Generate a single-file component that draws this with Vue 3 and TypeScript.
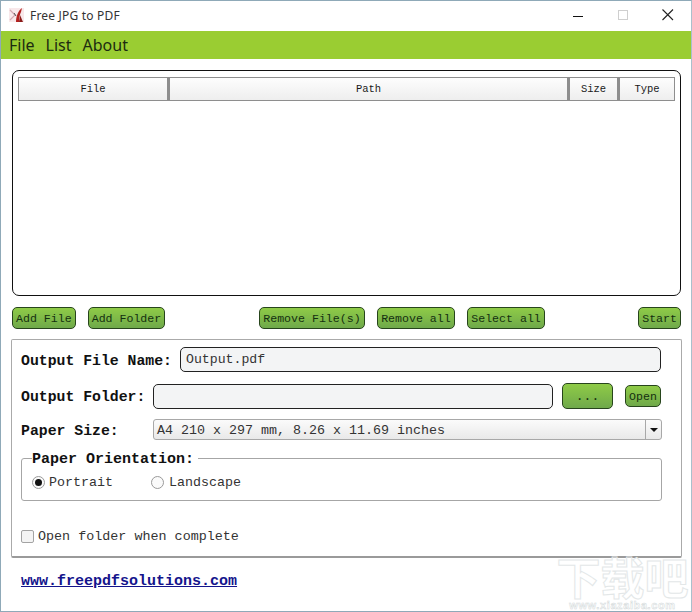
<script setup lang="ts">
const columns = [
  { label: 'File', width: 150 },
  { label: 'Path', width: 400 },
  { label: 'Size', width: 50 },
  { label: 'Type', width: 57 },
]
</script>

<template>
  <div class="window">
    <header class="titlebar">
      <svg class="app-icon" width="16" height="16" viewBox="0 0 16 16">
        <rect x="0" y="1" width="15" height="14" fill="#f8e8ea" />
        <path d="M1 3 L6 8 L1 13" fill="none" stroke="#d3a8b0" stroke-width="1.2" />
        <path d="M13 1 C9 4 7 9 7 15 L10 15 C10 10 11 7 12 5 Z" fill="#b3201f" />
        <path d="M11 8 L14 15 L10 15 Z" fill="#8a1b19" />
        <path d="M5 6 L7 9" stroke="#555" stroke-width="1" />
      </svg>
      <span class="app-title">Free JPG to PDF</span>
      <div class="winctl">
        <svg width="16" height="16" viewBox="0 0 16 16"><path d="M3 9.5H13" stroke="#111" stroke-width="1" /></svg>
        <svg width="16" height="16" viewBox="0 0 16 16"><rect x="3.5" y="3.5" width="9" height="9" fill="none" stroke="#cfcfcf" /></svg>
        <svg width="16" height="16" viewBox="0 0 16 16"><path d="M2.5 2.5L13 13M13 2.5L2.5 13" stroke="#222" stroke-width="1.1" /></svg>
      </div>
    </header>

    <nav class="menubar">
      <span>File</span><span>List</span><span>About</span>
    </nav>

    <main class="content">
      <section class="listbox">
        <div class="listhead">
          <div v-for="c in columns" :key="c.label" class="col" :style="{ width: c.width + 'px' }">{{ c.label }}</div>
        </div>
      </section>

      <div class="actions">
        <div class="group">
          <button class="btn">Add File</button>
          <button class="btn">Add Folder</button>
        </div>
        <div class="group mid">
          <button class="btn">Remove File(s)</button>
          <button class="btn">Remove all</button>
          <button class="btn">Select all</button>
        </div>
        <button class="btn">Start</button>
      </div>

      <section class="panel">
        <div class="row r1">
          <label class="lbl">Output File Name:</label>
          <div class="field grow">Output.pdf</div>
        </div>
        <div class="row r2">
          <label class="lbl lbl-folder">Output Folder:</label>
          <div class="field folder"></div>
          <button class="btn dots">...</button>
          <button class="btn open">Open</button>
        </div>
        <div class="row r3">
          <label class="lbl lbl-folder">Paper Size:</label>
          <div class="select">
            <span class="select-text">A4 210 x 297 mm, 8.26 x 11.69 inches</span>
            <span class="select-arrow"><i></i></span>
          </div>
        </div>

        <fieldset class="orient">
          <legend>Paper Orientation:</legend>
          <div class="radios">
            <span class="radio on"></span><span class="rlabel portrait">Portrait</span>
            <span class="radio"></span><span class="rlabel landscape">Landscape</span>
          </div>
        </fieldset>

        <div class="check">
          <span class="box"></span><span>Open folder when complete</span>
        </div>
      </section>

      <a class="link">www.freepdfsolutions.com</a>
    </main>

    <div class="watermark">
      <span class="wm-big">下载吧</span>
      <span class="wm-small">www.xiazaiba.com</span>
    </div>
  </div>
</template>

<style>
html, body { margin: 0; background: #fff; }
</style>

<style scoped>
* { box-sizing: border-box; }
.window {
  position: relative;
  width: 692px;
  height: 612px;
  overflow: hidden;
  background: #fff;
  border: 1px solid #8fa9b8;
  border-right-color: #a9c0cc;
  font-family: "Liberation Mono", monospace;
  color: #1a1a1a;
}
.titlebar {
  height: 30px;
  display: flex;
  align-items: center;
  padding: 0 0 2px 8px;
}
.app-title {
  margin-left: 5px;
  font: 12px "Noto Sans", "Open Sans", sans-serif;
  letter-spacing: 0.2px;
  color: #333;
}
.winctl {
  margin-left: auto;
  display: flex;
  gap: 29px;
  padding-right: 15px;
}
.menubar {
  height: 28px;
  background: #9acd32;
  display: flex;
  align-items: center;
  gap: 11px;
  padding: 0 0 1px 8px;
  font: 16px "Noto Sans", "Open Sans", sans-serif;
  color: #1c2b10;
}
.content { padding: 11px 10px 0 11px; }
.listbox {
  height: 226px;
  border: 1px solid #111;
  border-radius: 7px;
  padding: 6px 5px;
}
.listhead { display: flex; height: 24px; }
.col {
  display: flex;
  align-items: center;
  justify-content: center;
  padding-bottom: 1px;
  font-size: 10.5px;
  background: linear-gradient(#fdfdfd, #eeeeee);
  border: 1px solid #8e8e8e;
}
.col + .col { border-left: 2px solid #8e8e8e; }
.actions {
  display: flex;
  align-items: center;
  margin-top: 11px;
  height: 22px;
}
.group { display: flex; gap: 12px; }
.mid { gap: 12.5px; margin-left: 94px; margin-right: auto; }
.btn {
  height: 22px;
  padding: 1px 3px 0;
  border: 1px solid #27451c;
  border-radius: 5px;
  background: linear-gradient(#8fcb47, #6fa94a);
  font-family: "Liberation Mono", monospace;
  font-size: 11.6px;
  color: #14300f;
  white-space: nowrap;
}
.panel {
  margin-top: 10px;
  margin-left: -1px;
  margin-right: -1px;
  height: 219px;
  border: 1px solid #aaa;
  border-bottom: 2px solid #9a9a9a;
  border-radius: 2px;
  padding: 7px 9px 0;
}
.row { display: flex; align-items: center; }
.r1 { height: 25px; }
.r2 { height: 26px; margin-top: 11px; }
.r3 { height: 21px; margin-top: 10px; }
.lbl {
  padding-top: 2px;
  font-size: 14.8px;
  font-weight: 700;
  white-space: nowrap;
  color: #111;
}
.lbl-folder { width: 132px; }
.r1 .lbl { width: 159px; }
.field {
  height: 25px;
  background: #f3f4f5;
  border: 1px solid #222;
  border-radius: 5px;
  padding-left: 5px;
  font-size: 13.2px;
  line-height: 23px;
  color: #333;
}
.grow { width: 481px; }
.folder { width: 400px; }
.dots {
  width: 51px;
  height: 26px;
  margin-left: 9px;
  font-size: 13px;
}
.open {
  width: 36px;
  margin-left: 12px;
  padding: 1px 0 0;
}
.select {
  width: 509px;
  height: 21px;
  display: flex;
  border: 1px solid #a8a8a8;
  border-radius: 3px;
  background: linear-gradient(#fbfbfb, #e9e9e9);
}
.select-text {
  flex: 1;
  padding-left: 3px;
  font-size: 13.33px;
  line-height: 21px;
  color: #333;
}
.select-arrow {
  width: 16px;
  border-left: 1px solid #a8a8a8;
  display: flex;
  align-items: center;
  justify-content: center;
}
.select-arrow i {
  width: 0;
  height: 0;
  border-left: 4px solid transparent;
  border-right: 4px solid transparent;
  border-top: 4px solid #111;
}
.orient {
  margin: 9px 0 0;
  padding: 0 0 0 10px;
  width: 641px;
  height: 52px;
  border: 1px solid #a6a6a6;
  border-radius: 3px;
}
.orient legend {
  margin-left: 0;
  padding: 2px 4px 0 0;
  font-size: 15px;
  font-weight: 700;
  line-height: 17px;
  color: #111;
}
.radios {
  display: flex;
  align-items: center;
  height: 18px;
  margin-top: 5px;
  font-size: 13.33px;
  color: #333;
}
.radio {
  width: 13px;
  height: 13px;
  border: 1px solid #9a9a9a;
  border-radius: 50%;
  background: #fafafa;
  display: inline-block;
  position: relative;
}
.radio.on::after {
  content: "";
  position: absolute;
  left: 2px;
  top: 2px;
  width: 7px;
  height: 7px;
  border-radius: 50%;
  background: #111;
}
.rlabel { margin-left: 4px; white-space: nowrap; }
.portrait { width: 102px; }
.landscape { margin-left: 5px; }
.check {
  display: flex;
  align-items: center;
  gap: 4px;
  margin-top: 28px;
  font-size: 13.4px;
  color: #333;
}
.box {
  width: 13px;
  height: 13px;
  border: 1px solid #a3a3a3;
  border-radius: 2px;
  background: #f4f4f4;
}
.link {
  display: block;
  width: max-content;
  margin: 15px 0 0 9px;
  font-size: 15px;
  font-weight: 700;
  line-height: 17px;
  color: #14148c;
  text-decoration: underline;
}
.watermark {
  position: absolute;
  right: 0;
  bottom: 0;
  width: 137px;
  height: 58px;
  display: flex;
  flex-direction: column;
  align-items: center;
  justify-content: flex-end;
}
.wm-big {
  font-family: "Noto Sans CJK SC", sans-serif;
  font-size: 44px;
  line-height: 46px;
  font-weight: 700;
  white-space: nowrap;
  color: transparent;
  -webkit-text-stroke: 1px #e3e7e8;
}
.wm-small {
  font-family: "Liberation Sans", sans-serif;
  font-size: 11px;
  line-height: 12px;
  font-weight: 700;
  letter-spacing: 0.6px;
  white-space: nowrap;
  color: transparent;
  -webkit-text-stroke: 0.5px #d3d9da;
}
</style>
